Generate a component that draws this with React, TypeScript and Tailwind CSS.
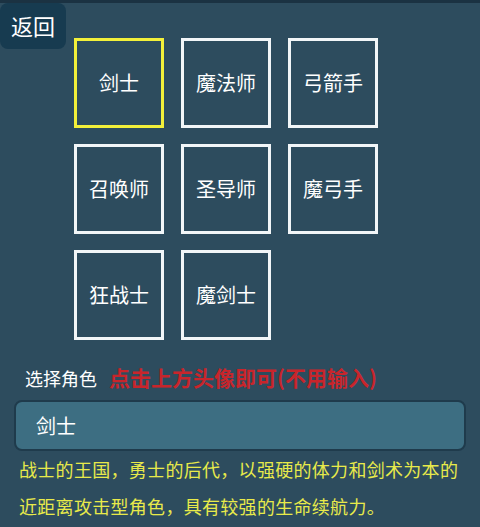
import { useState } from 'react';

const roles = ['剑士', '魔法师', '弓箭手', '召唤师', '圣导师', '魔弓手', '狂战士', '魔剑士'];

const font = { fontFamily: '"Noto Sans CJK SC", "Noto Sans", sans-serif' };

const App = () => {
  const [role, setRole] = useState('剑士');

  return (
    <section className="h-[527px] w-[480px] overflow-hidden bg-[#2d4c5e] text-white" style={font}>
      <div className="h-[3px] bg-[#1b3242]" />

      {/* 返回 + 角色选择格子 */}
      <div className="flex">
        <button className="h-[46px] w-[66px] shrink-0 rounded-lg bg-[#173b50] pb-[2px] text-[22px] leading-none text-white">
          返回
        </button>
        <div className="mt-[35px] ml-[8px] grid grid-cols-[90px_90px_90px] gap-x-[17px] gap-y-[16px]">
          {roles.map((name) => (
            <button
              key={name}
              onClick={() => setRole(name)}
              className={`flex h-[90px] w-[90px] items-center justify-center border-[3px] text-[20px] text-white ${
                role === name ? 'border-[#f3f03a]' : 'border-[#f2f6f8]'
              }`}
            >
              {name}
            </button>
          ))}
        </div>
      </div>

      {/* 选择角色 */}
      <div className="mt-[27px] flex items-center gap-[12px] pl-[25px] leading-none">
        <span className="text-[18px]">选择角色</span>
        <span className="text-[21px] font-bold text-[#c8252b]">点击上方头像即可(不用输入)</span>
      </div>
      <div className="mx-[14px] mt-[12px] flex h-[51px] items-center rounded-lg border-2 border-[#1f3b4c] bg-[#3d6e82] pl-[20px] text-[20px]">
        {role}
      </div>

      <p className="mt-0 pl-[19px] text-[18px] leading-[37px] tracking-[0.3px] whitespace-nowrap text-[#e8ea4a]">
        战士的王国，勇士的后代，以强硬的体力和剑术为本的
        <br />
        近距离攻击型角色，具有较强的生命续航力。
      </p>
    </section>
  );
};

export default App;
